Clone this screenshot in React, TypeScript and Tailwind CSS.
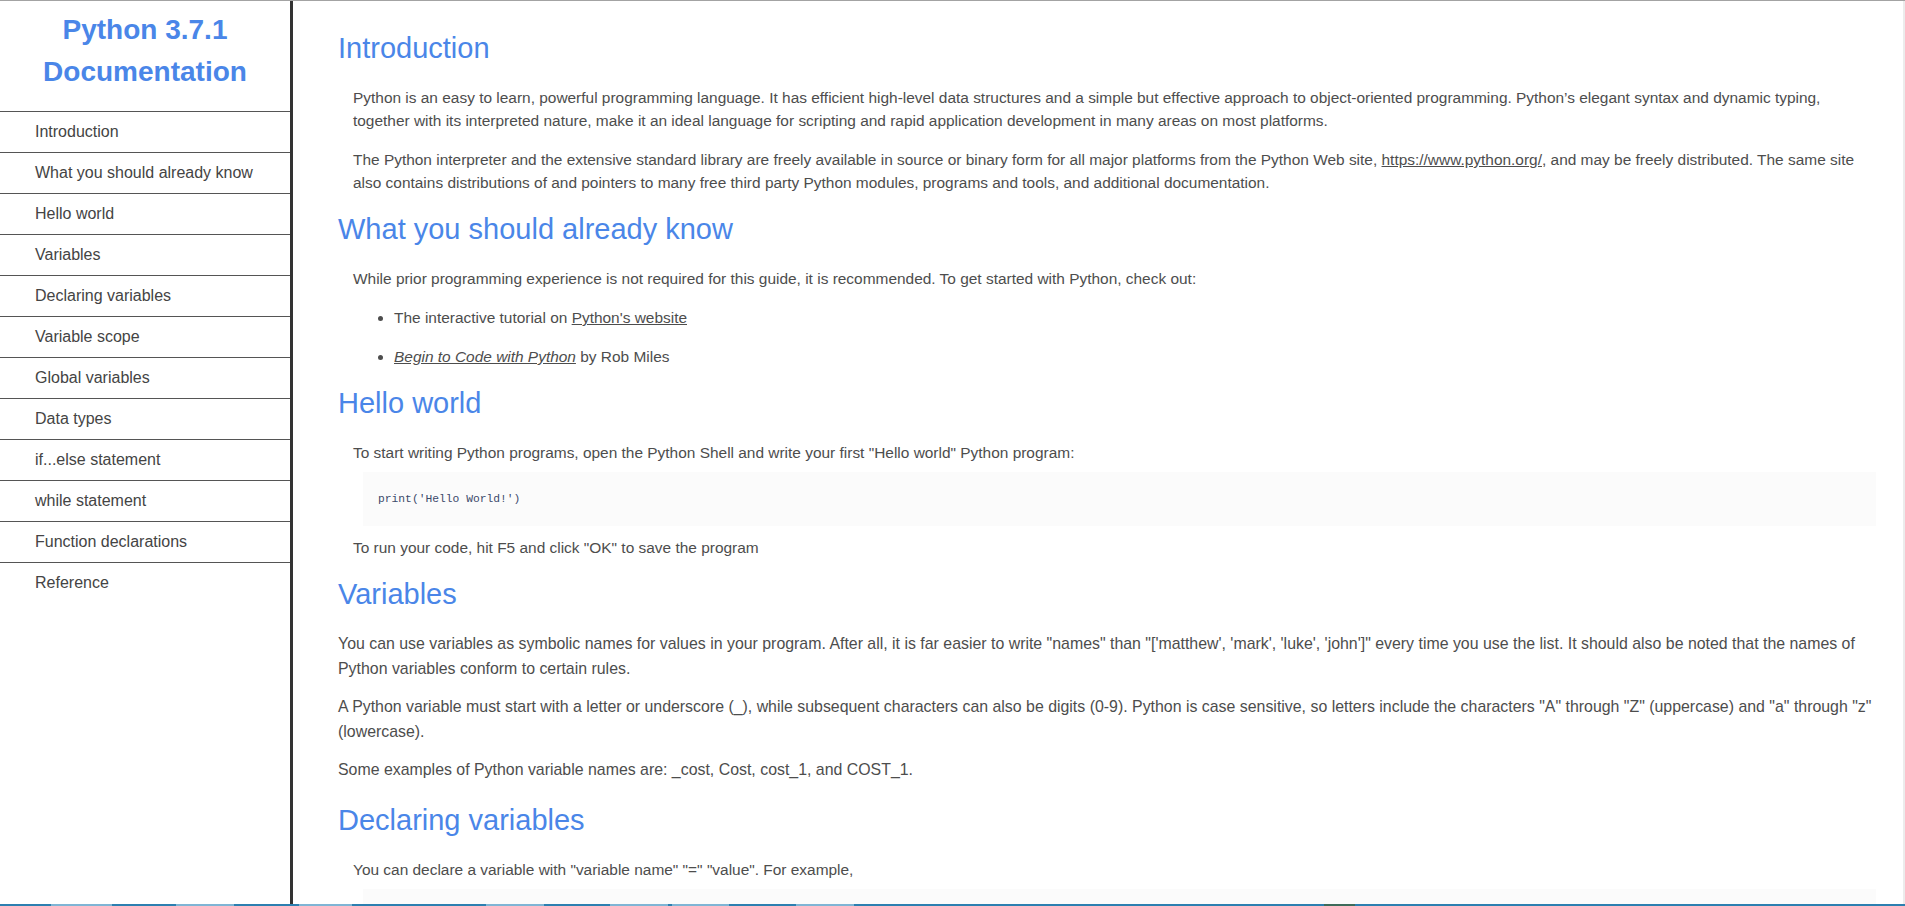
const navItems = [
  "Introduction",
  "What you should already know",
  "Hello world",
  "Variables",
  "Declaring variables",
  "Variable scope",
  "Global variables",
  "Data types",
  "if...else statement",
  "while statement",
  "Function declarations",
  "Reference",
];

const h2 = "text-[29px] leading-[35px] text-[#4a86e8] mt-[18px] mb-[20px]";
// indented paragraphs (intro, lists, hello world)
const p = "ml-[15px] text-[15.45px] leading-[23px] text-[#4d4d4d] mb-[16px]";
// plain paragraphs in the Variables section are a touch larger
const pv = "text-[15.9px] leading-[24.5px] text-[#4d4d4d] mb-[14px]";
const code =
  "bg-[#fbfbfb] ml-[25px] pl-[15px] py-[19px] text-[11.3px] leading-[16px] text-[#3b4a6b] font-['Liberation_Mono',monospace]";

function Sidebar() {
  return (
    <aside className="w-[293px] shrink-0 border-r-[3px] border-[#333]">
      <h1 className="pt-[8px] pb-[18px] text-center text-[28px] leading-[42px] font-bold text-[#4a86e8]">
        Python 3.7.1
        <br />
        Documentation
      </h1>
      <nav>
        {navItems.map((item) => (
          <a
            key={item}
            href="#"
            className="block h-[41px] border-t border-[#555] pl-[35px] text-[16px] leading-[40px] text-[#444]"
          >
            {item}
          </a>
        ))}
      </nav>
    </aside>
  );
}

function Content() {
  return (
    <main className="min-w-0 flex-1 overflow-hidden pt-[12px] pl-[45px] pr-[27px]">
      <section>
        <h2 className={h2}>Introduction</h2>
        <p className={p}>
          Python is an easy to learn, powerful programming language. It has
          efficient high-level data structures and a simple but effective
          approach to object-oriented programming. Python’s elegant syntax and
          dynamic typing, together with its interpreted nature, make it an ideal
          language for scripting and rapid application development in many areas
          on most platforms.
        </p>
        <p className={p}>
          The Python interpreter and the extensive standard library are freely
          available in source or binary form for all major platforms from the
          Python Web site,{" "}
          <a href="#" className="underline">
            https://www.python.org/
          </a>
          , and may be freely distributed. The same site also contains
          distributions of and pointers to many free third party Python modules,
          programs and tools, and additional documentation.
        </p>
      </section>

      <section>
        <h2 className={h2}>What you should already know</h2>
        <p className={p}>
          While prior programming experience is not required for this guide, it
          is recommended. To get started with Python, check out:
        </p>
        <ul className="ml-[15px] list-disc pl-[41px] text-[#4d4d4d]">
          <li className="mb-[16px] text-[15.45px] leading-[23px]">
            The interactive tutorial on{" "}
            <a href="#" className="underline">
              Python's website
            </a>
          </li>
          <li className="mb-[16px] text-[15.45px] leading-[23px]">
            <a href="#" className="italic underline">
              Begin to Code with Python
            </a>{" "}
            by Rob Miles
          </li>
        </ul>
      </section>

      <section>
        <h2 className={h2}>Hello world</h2>
        <p className={`${p} !mb-[8px]`}>
          To start writing Python programs, open the Python Shell and write your
          first "Hello world" Python program:
        </p>
        <pre className={`${code} mb-[10px]`}>print('Hello World!')</pre>
        <p className={p}>
          To run your code, hit F5 and click "OK" to save the program
        </p>
      </section>

      <section>
        <h2 className={h2}>Variables</h2>
        <p className={`${pv} mt-[1px]`}>
          You can use variables as symbolic names for values in your program.
          After all, it is far easier to write "names" than "['matthew', 'mark',
          'luke', 'john']" every time you use the list. It should also be noted
          that the names of Python variables conform to certain rules.
        </p>
        <p className={pv}>
          A Python variable must start with a letter or underscore (_), while
          subsequent characters can also be digits (0-9). Python is case
          sensitive, so letters include the characters "A" through "Z"
          (uppercase) and "a" through "z" (lowercase).
        </p>
        <p className={`${pv} !mb-[20px]`}>
          Some examples of Python variable names are: _cost, Cost, cost_1, and
          COST_1.
        </p>
      </section>

      <section>
        <h2 className={h2}>Declaring variables</h2>
        <p className={`${p} !mb-[8px]`}>
          You can declare a variable with "variable name" "=" "value". For
          example,
        </p>
        <pre className={`${code} mb-[10px]`}>name = 'Python'</pre>
      </section>
    </main>
  );
}

function Taskbar() {
  return (
    <div className="flex h-[2px] shrink-0 bg-[#2c7fb0]">
      <span className="ml-[51px] w-[61px] bg-[#7fb5d5]" />
      <span className="ml-[64px] w-[58px] bg-[#7fb5d5]" />
      <span className="ml-[65px] w-[53px] bg-[#7fb5d5]" />
      <span className="ml-[134px] w-[58px] bg-[#7fb5d5]" />
      <span className="ml-[66px] w-[58px] bg-[#7fb5d5]" />
      <span className="ml-[4px] w-[57px] bg-[#7fb5d5]" />
      <span className="ml-[67px] w-[58px] bg-[#7fb5d5]" />
      <span className="ml-[470px] w-[31px] bg-[#3d6b5a]" />
    </div>
  );
}

export default function App() {
  return (
    <div className="flex h-[906px] flex-col overflow-hidden bg-white font-['Liberation_Sans',Arial,sans-serif]">
      <div className="h-px shrink-0 bg-[#a3a3a3]" />
      <div className="flex min-h-0 flex-1">
        <Sidebar />
        <Content />
        <div className="w-[2px] shrink-0 bg-[#ececec]" />
      </div>
      <Taskbar />
    </div>
  );
}
